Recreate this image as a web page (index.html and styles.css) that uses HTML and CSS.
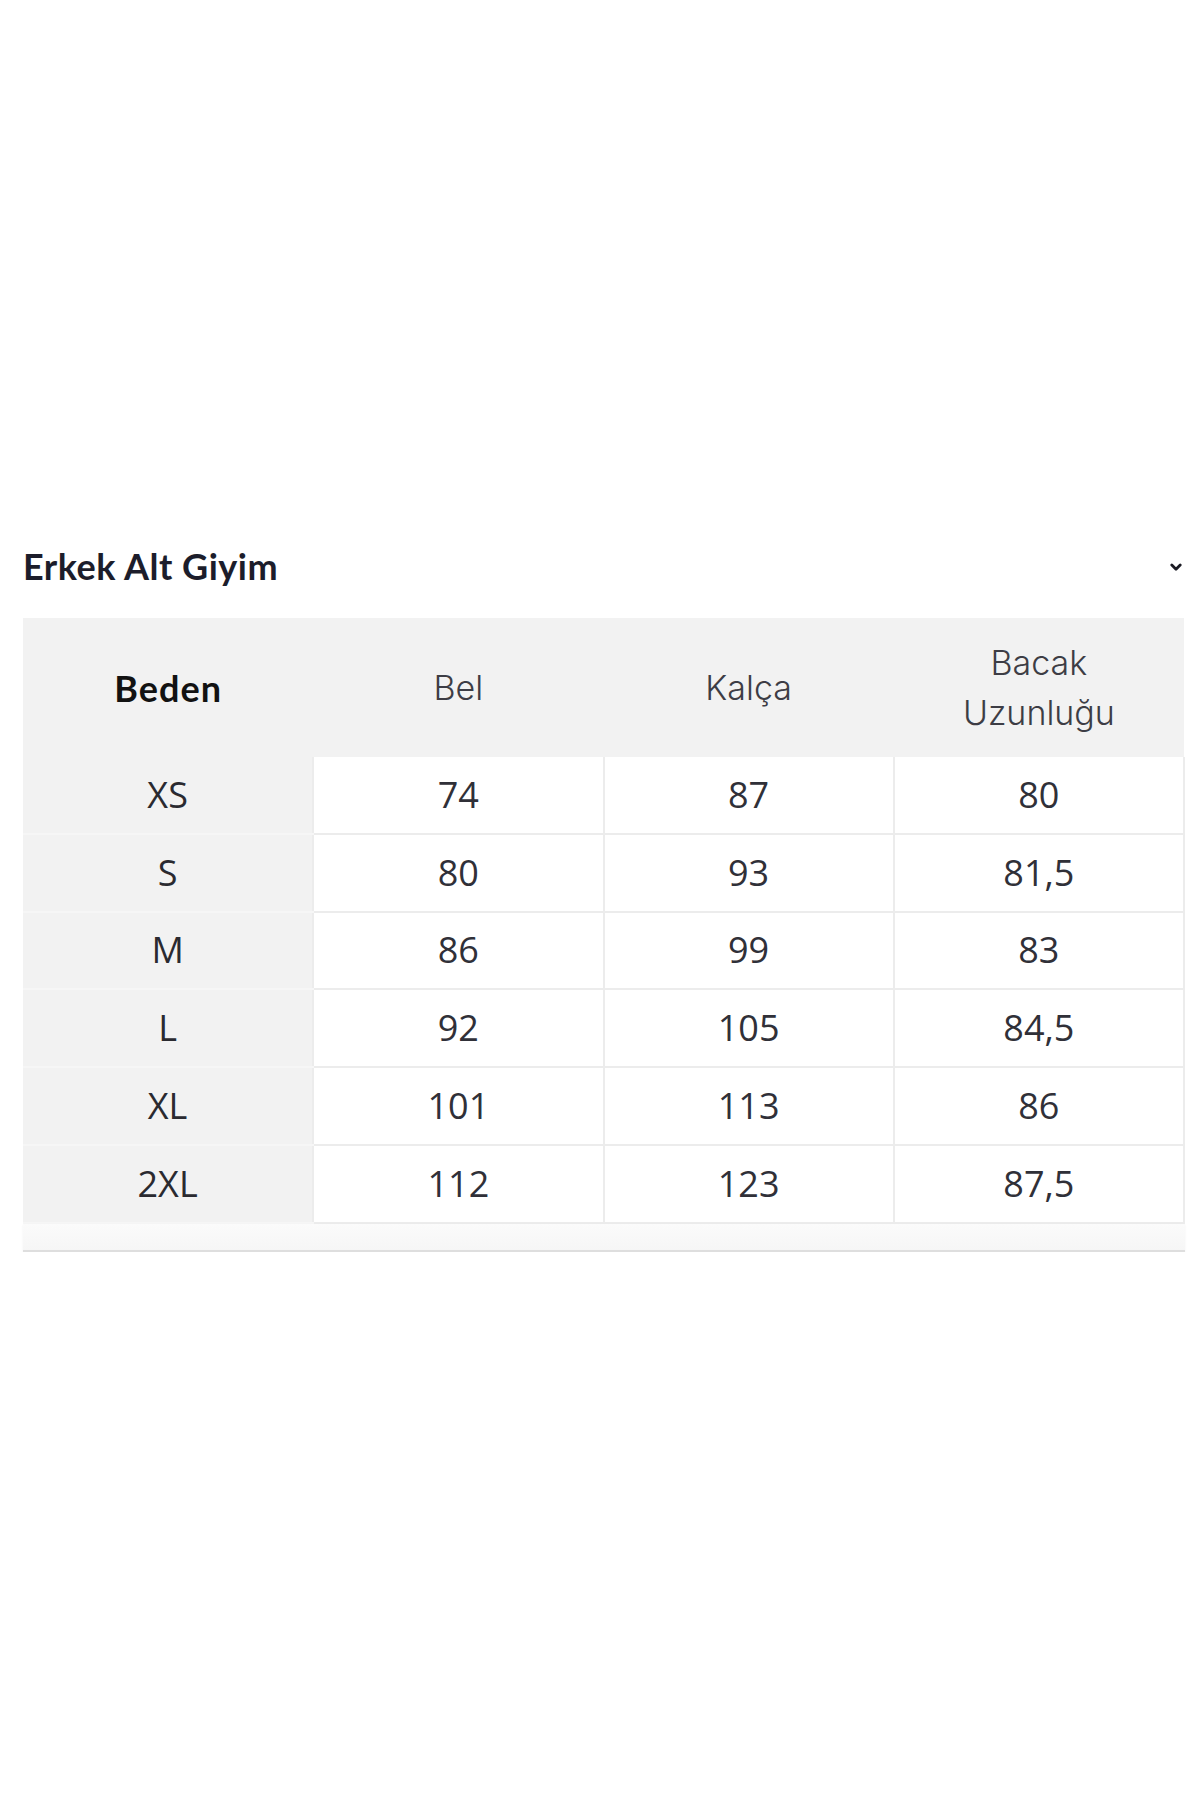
FILE: index.html
```html
<!DOCTYPE html>
<html lang="tr">
<head>
<meta charset="utf-8">
<title>Erkek Alt Giyim</title>
<link rel="stylesheet" href="styles.css">
</head>
<body>
<main class="page">
  <section class="accordion">
    <div class="acc-head">
      <h2 class="acc-title">Erkek Alt Giyim</h2>
      <svg class="chevron" width="12" height="9" viewBox="0 0 12 9" aria-hidden="true">
        <path d="M1.8 2 L6 6.2 L10.2 2" fill="none" stroke="#1b1b24" stroke-width="2.8" stroke-linecap="round" stroke-linejoin="round"/>
      </svg>
    </div>
    <table class="size-table">
      <thead>
        <tr>
          <th class="th-size">Beden</th>
          <th>Bel</th>
          <th>Kalça</th>
          <th>Bacak<br>Uzunluğu</th>
        </tr>
      </thead>
      <tbody>
        <tr><td class="size">XS</td><td>74</td><td>87</td><td>80</td></tr>
        <tr><td class="size">S</td><td>80</td><td>93</td><td>81,5</td></tr>
        <tr><td class="size">M</td><td>86</td><td>99</td><td>83</td></tr>
        <tr><td class="size">L</td><td>92</td><td>105</td><td>84,5</td></tr>
        <tr><td class="size">XL</td><td>101</td><td>113</td><td>86</td></tr>
        <tr><td class="size">2XL</td><td>112</td><td>123</td><td>87,5</td></tr>
      </tbody>
    </table>
    <div class="acc-foot"></div>
  </section>
</main>
</body>
</html>
```

FILE: styles.css
```css
html, body {
  margin: 0;
  padding: 0;
  background: #ffffff;
}

.page {
  padding: 546px 15px 0 23px;
}

.accordion {
  width: 1162px;
}

.acc-head {
  display: flex;
  align-items: center;
  justify-content: space-between;
  height: 40px;
  margin-bottom: 32px;
}

.acc-title {
  margin: 0;
  font-family: "Lato", "Liberation Sans", sans-serif;
  font-weight: 700;
  font-size: 36px;
  line-height: 40px;
  letter-spacing: 0.5px;
  color: #1c1d2b;
}

.chevron {
  margin-right: 3px;
  margin-top: 2px;
}

.size-table {
  width: 1162px;
  border-collapse: collapse;
  table-layout: fixed;
}

.size-table th {
  background: #f2f2f2;
  height: 139px;
  padding: 0;
  font-family: "Inter", "Lato", sans-serif;
  font-weight: 300;
  font-size: 34px;
  line-height: 50px;
  color: #3d3d45;
  text-align: center;
  vertical-align: middle;
}

.size-table th.th-size {
  font-family: "Lato", "Liberation Sans", sans-serif;
  font-weight: 700;
  font-size: 36px;
  color: #121212;
  letter-spacing: 1px;
}

.size-table td {
  height: 75.8px;
  padding: 0;
  border: 2px solid #ececec;
  background: #ffffff;
  font-family: "Open Sans", "Noto Sans", sans-serif;
  font-size: 36px;
  line-height: 40px;
  color: #303038;
  text-align: center;
  vertical-align: middle;
}

.size-table tbody tr:first-child td {
  border-top: 0;
}

.size-table td.size {
  background: #f2f2f2;
  border-left: 0;
  border-right: 0;
  border-bottom-color: #f6f6f6;
  color: #2a2a30;
}

.acc-foot {
  height: 26px;
  background: linear-gradient(#fbfbfb, #f6f6f6);
  border-bottom: 2px solid #dedede;
  box-shadow: 0 1px 2px rgba(0, 0, 0, 0.06);
}
```
